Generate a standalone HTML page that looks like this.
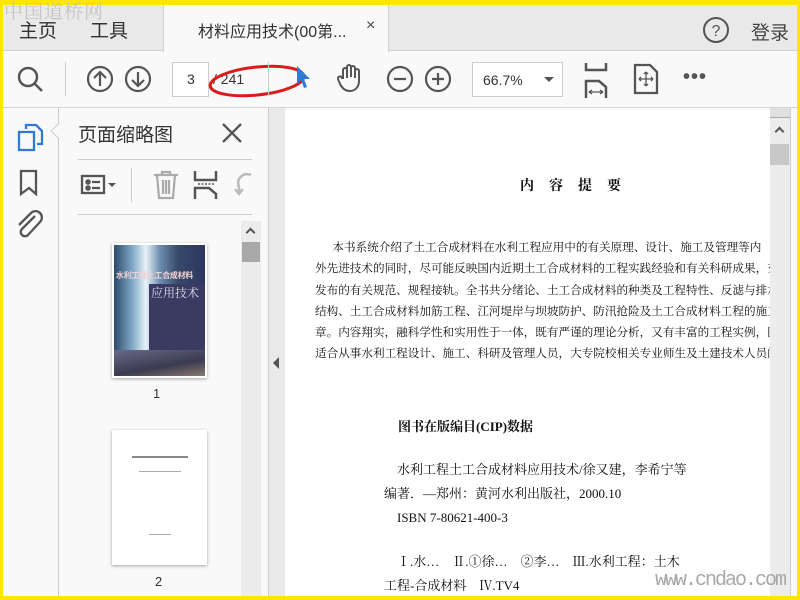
<!DOCTYPE html>
<html><head><meta charset="utf-8"><style>
*{margin:0;padding:0;box-sizing:border-box}
body{width:800px;height:600px;overflow:hidden;background:#ffe600;position:relative;font-family:"Liberation Sans","Noto Sans CJK SC",sans-serif}
.a{position:absolute}
.serif{font-family:"Liberation Serif","Noto Serif CJK SC",serif;color:#111}
</style></head><body>
<div class="a" style="left:3px;top:5px;width:794px;height:591px;background:#f9f9f9"></div>
<!-- title bar -->
<div class="a" style="left:3px;top:5px;width:794px;height:46px;background:#e9e9e9;border-bottom:1px solid #cfcfcf"></div>
<div class="a" style="left:163px;top:5px;width:226px;height:47px;background:#f9f9f9;border-left:1px solid #cfcfcf;border-right:1px solid #cfcfcf"></div>
<div class="a" style="left:4px;top:-3px;font-size:19px;color:#c4c4c4;letter-spacing:1px;font-family:'Noto Serif CJK SC',serif;white-space:nowrap">中国道桥网</div>
<div class="a" style="left:19px;top:16px;font-size:19px;color:#333">主页</div>
<div class="a" style="left:90px;top:16px;font-size:19px;color:#333">工具</div>
<div class="a" style="left:198px;top:18px;font-size:16px;color:#333;white-space:nowrap">材料应用技术(00第...</div>
<div class="a" style="left:366px;top:17px;font-size:16px;color:#444">×</div>
<svg class="a" style="left:701px;top:16px" width="30" height="30"><circle cx="15" cy="14" r="12" fill="none" stroke="#555" stroke-width="2"/><text x="15" y="20" font-size="16" text-anchor="middle" fill="#555" font-family="Liberation Sans">?</text></svg>
<div class="a" style="left:751px;top:18px;font-size:19px;color:#444">登录</div>
<!-- toolbar -->
<div class="a" style="left:3px;top:107px;width:794px;height:1px;background:#d4d4d4"></div>
<svg class="a" style="left:15px;top:64px" width="32" height="32" fill="none" stroke="#555" stroke-width="2.5"><circle cx="13" cy="13" r="9"/><line x1="20" y1="20" x2="27" y2="27"/></svg>
<div class="a" style="left:65px;top:62px;width:1px;height:34px;background:#ccc"></div>
<svg class="a" style="left:86px;top:65px" width="70" height="30" fill="none" stroke="#555" stroke-width="2.2"><circle cx="14" cy="14" r="12"/><path d="M14 21V8M8 13l6-6 6 6"/><circle cx="52" cy="14" r="12"/><path d="M52 7v13M46 15l6 6 6-6"/></svg>
<div class="a" style="left:172px;top:62px;width:37px;height:35px;background:#fff;border:1px solid #ccc;font-size:14px;color:#333;padding:8px 0 0 14px">3</div>
<div class="a" style="left:213px;top:71px;font-size:14px;color:#333">/ 241</div>
<svg class="a" style="left:205px;top:60px" width="105" height="42"><ellipse cx="52" cy="21" rx="47" ry="14" fill="none" stroke="#d81c1c" stroke-width="3" transform="rotate(-6 52 21)"/></svg>
<div class="a" style="left:268px;top:62px;width:1px;height:34px;background:#ccc"></div>
<svg class="a" style="left:294px;top:64px" width="20" height="26"><path d="M3 2l13 13-6 0 3 8-3 1-3-8-4 4z" fill="#2d7bd6"/></svg>
<svg class="a" style="left:336px;top:62px" width="30" height="32" fill="none" stroke="#555" stroke-width="2"><path d="M7 16V8a2 2 0 0 1 4 0v8V5a2 2 0 0 1 4 0v10V6a2 2 0 0 1 4 0v10V9a2 2 0 0 1 4 0v10c0 6-4 10-9 10s-8-3-10-7l-2-5a2 2 0 0 1 4-1z"/></svg>
<svg class="a" style="left:386px;top:65px" width="70" height="30" fill="none" stroke="#555" stroke-width="2.2"><circle cx="14" cy="14" r="12"/><path d="M8 14h12"/><circle cx="52" cy="14" r="12"/><path d="M46 14h12M52 8v12"/></svg>
<div class="a" style="left:472px;top:62px;width:91px;height:35px;background:#fff;border:1px solid #ccc;font-size:14px;color:#333;padding:9px 0 0 10px">66.7%</div>
<div class="a" style="left:544px;top:77px;border-left:5px solid transparent;border-right:5px solid transparent;border-top:5px solid #555"></div>
<svg class="a" style="left:583px;top:62px" width="26" height="36" fill="none" stroke="#555" stroke-width="2.5"><path d="M3 1v7h20V1M3 36V19h13l7 6v11"/><path d="M6 30h14M6 30l3-2M6 30l3 2M20 30l-3-2M20 30l-3 2" stroke-width="1.3"/></svg>
<svg class="a" style="left:633px;top:63px" width="26" height="32" fill="none" stroke="#555" stroke-width="2.3"><path d="M2 2h15l7 7v21H2z"/><path d="M13 9v14M6 16h14M13 9l-2 2M13 9l2 2M13 23l-2-2M13 23l2-2M6 16l2-2M6 16l2 2M20 16l-2-2M20 16l-2 2" stroke-width="1.3"/></svg>
<div class="a" style="left:683px;top:66px;font-size:20px;color:#555;letter-spacing:1px;font-weight:bold">•••</div>
<!-- left icon column -->
<div class="a" style="left:58px;top:108px;width:1px;height:488px;background:#ccc"></div>
<svg class="a" style="left:17px;top:123px" width="28" height="30" fill="none" stroke="#2d7bd6" stroke-width="2.3"><path d="M9 6V2h10l6 6v13h-5"/><path d="M2 9h15v18H2z"/></svg>
<svg class="a" style="left:19px;top:169px" width="20" height="28" fill="none" stroke="#555" stroke-width="2.3"><path d="M2 2h15v23l-7-6-8 6z"/></svg>
<svg class="a" style="left:15px;top:210px" width="30" height="30" fill="none" stroke="#555" stroke-width="2.3"><path d="M20 6L7 19a4 4 0 0 0 6 6L25 12a6 6 0 0 0-9-9L4 15"/></svg>
<div class="a" style="left:53px;top:125px;width:12px;height:12px;background:#f9f9f9;border-left:1px solid #ccc;border-bottom:1px solid #ccc;transform:rotate(45deg)"></div>
<!-- panel -->
<div class="a" style="left:78px;top:120px;font-size:19px;color:#333;white-space:nowrap">页面缩略图</div>
<svg class="a" style="left:221px;top:122px" width="22" height="22" stroke="#555" stroke-width="2.3"><path d="M2 2l18 18M20 2L2 20"/></svg>
<div class="a" style="left:78px;top:159px;width:174px;height:1px;background:#ccc"></div>
<div class="a" style="left:78px;top:214px;width:174px;height:1px;background:#ccc"></div>
<svg class="a" style="left:80px;top:172px" width="40" height="26" fill="none" stroke="#555" stroke-width="2.3"><rect x="2" y="4" width="22" height="17"/><circle cx="8" cy="10" r="1.6" fill="#555"/><circle cx="8" cy="16" r="1.6" fill="#555"/><path d="M12 10h8M12 16h8"/><path d="M28 11h8l-4 4z" fill="#555" stroke="none"/></svg>
<div class="a" style="left:131px;top:168px;width:1px;height:34px;background:#ccc"></div>
<svg class="a" style="left:152px;top:170px" width="28" height="30" fill="none" stroke="#aaa" stroke-width="2.2"><path d="M2 5h24M10 5V2h8v3M5 5l2 23h14l2-23M11 10v14M14 10v14M17 10v14"/></svg>
<svg class="a" style="left:193px;top:170px" width="26" height="30" fill="none" stroke="#555" stroke-width="2.5"><path d="M2 1v9h21V1M2 29V18h14l7 6v5"/><path d="M5 14h17" stroke-dasharray="2 1.5" stroke-width="1.5"/></svg>
<svg class="a" style="left:233px;top:172px" width="20" height="28" fill="none" stroke="#bbb" stroke-width="2.5"><path d="M18 3a9 9 0 0 0-12 12l0 6M2 17l4 5 4-5"/></svg>
<!-- panel scrollbar -->
<div class="a" style="left:241px;top:221px;width:20px;height:375px;background:#ececec"></div>
<div class="a" style="left:247px;top:229px;width:7px;height:7px;border-left:2px solid #555;border-top:2px solid #555;transform:rotate(45deg)"></div>
<div class="a" style="left:242px;top:242px;width:18px;height:20px;background:#a8a8a8"></div>
<!-- thumb 1 -->
<div class="a" style="left:112px;top:243px;width:95px;height:135px;background:#fff;box-shadow:0 1px 3px rgba(0,0,0,.35)"></div>
<div class="a" style="left:114px;top:245px;width:91px;height:131px;background:linear-gradient(90deg,#2b4a6a 0%,#7ea8c6 20%,#e8f2f8 35%,#6e8fb0 50%,#374a6a 70%,#2e3560 100%)"></div>
<div class="a" style="left:149px;top:284px;width:56px;height:92px;background:#3a3a62"></div>
<div class="a" style="left:114px;top:350px;width:91px;height:26px;background:linear-gradient(170deg,#6a6a88,#3a3a50 60%,#8a7a70)"></div>
<div class="a" style="left:116px;top:270px;font-size:8px;color:#f4d0d0;font-weight:bold;white-space:nowrap;letter-spacing:-0.3px">水利工程土工合成材料</div>
<div class="a" style="left:151px;top:284px;font-size:12px;color:#dde;font-family:'Noto Serif CJK SC',serif;white-space:nowrap">应用技术</div>
<div class="a" style="left:153px;top:386px;font-size:13px;color:#333">1</div>
<!-- thumb 2 -->
<div class="a" style="left:112px;top:430px;width:95px;height:135px;background:#fff;box-shadow:0 1px 3px rgba(0,0,0,.35)"></div>
<div class="a" style="left:132px;top:456px;width:56px;height:2px;background:#888"></div>
<div class="a" style="left:139px;top:471px;width:42px;height:1px;background:#aaa"></div>
<div class="a" style="left:149px;top:534px;width:22px;height:1px;background:#aaa"></div>
<div class="a" style="left:155px;top:574px;font-size:13px;color:#333">2</div>
<!-- splitter -->
<div class="a" style="left:268px;top:108px;width:1px;height:488px;background:#ccc"></div>
<div class="a" style="left:269px;top:108px;width:16px;height:488px;background:#e9e9e9"></div>
<div class="a" style="left:273px;top:357px;border-top:6px solid transparent;border-bottom:6px solid transparent;border-right:6px solid #555"></div>
<!-- page -->
<div class="a" style="left:285px;top:110px;width:485px;height:486px;background:#fff"></div>
<div class="a serif" style="left:520px;top:175px;font-size:14px;font-weight:bold;letter-spacing:15px;white-space:nowrap">内容提要</div>
<div class="a serif" style="left:315px;top:237px;width:455px;font-size:11.6px;line-height:21.3px;white-space:nowrap;overflow:hidden">
<div>&emsp;&ensp;本书系统介绍了土工合成材料在水利工程应用中的有关原理、设计、施工及管理等内</div>
<div>外先进技术的同时，尽可能反映国内近期土工合成材料的工程实践经验和有关科研成果，充</div>
<div>发布的有关规范、规程接轨。全书共分绪论、土工合成材料的种类及工程特性、反滤与排水</div>
<div>结构、土工合成材料加筋工程、江河堤岸与坝坡防护、防汛抢险及土工合成材料工程的施工</div>
<div>章。内容翔实，融科学性和实用性于一体，既有严谨的理论分析，又有丰富的工程实例，图文</div>
<div>适合从事水利工程设计、施工、科研及管理人员，大专院校相关专业师生及土建技术人员阅</div>
</div>
<div class="a serif" style="left:398px;top:416px;font-size:13px;font-weight:bold;white-space:nowrap">图书在版编目(CIP)数据</div>
<div class="a serif" style="left:384px;top:458px;font-size:13px;line-height:24px;white-space:nowrap">
<div>&ensp;&ensp;水利工程土工合成材料应用技术/徐又建，李希宁等</div>
<div>编著．—郑州：黄河水利出版社，2000.10</div>
<div>&ensp;&ensp;ISBN 7-80621-400-3</div>
<div style="margin-top:20px">&ensp;&ensp;Ⅰ.水…&emsp;Ⅱ.①徐…&emsp;②李…&emsp;Ⅲ.水利工程：土木</div>
<div>工程-合成材料&emsp;Ⅳ.TV4</div>
</div>
<!-- right scrollbar -->
<div class="a" style="left:770px;top:108px;width:20px;height:488px;background:#ececec"></div>
<div class="a" style="left:770px;top:108px;width:20px;height:10px;background:#e0e0e0;border-bottom:1px solid #aaa"></div>
<div class="a" style="left:776px;top:128px;width:7px;height:7px;border-left:2px solid #555;border-top:2px solid #555;transform:rotate(45deg)"></div>
<div class="a" style="left:770px;top:144px;width:19px;height:21px;background:#c8c8c8"></div>
<div class="a" style="left:790px;top:108px;width:1px;height:488px;background:#ccc"></div>
<div class="a" style="left:655px;top:569px;font-size:20px;color:#a8a8a8;font-family:'Liberation Mono',monospace;letter-spacing:-2px;white-space:nowrap">www.cndao.com</div>
</body></html>
